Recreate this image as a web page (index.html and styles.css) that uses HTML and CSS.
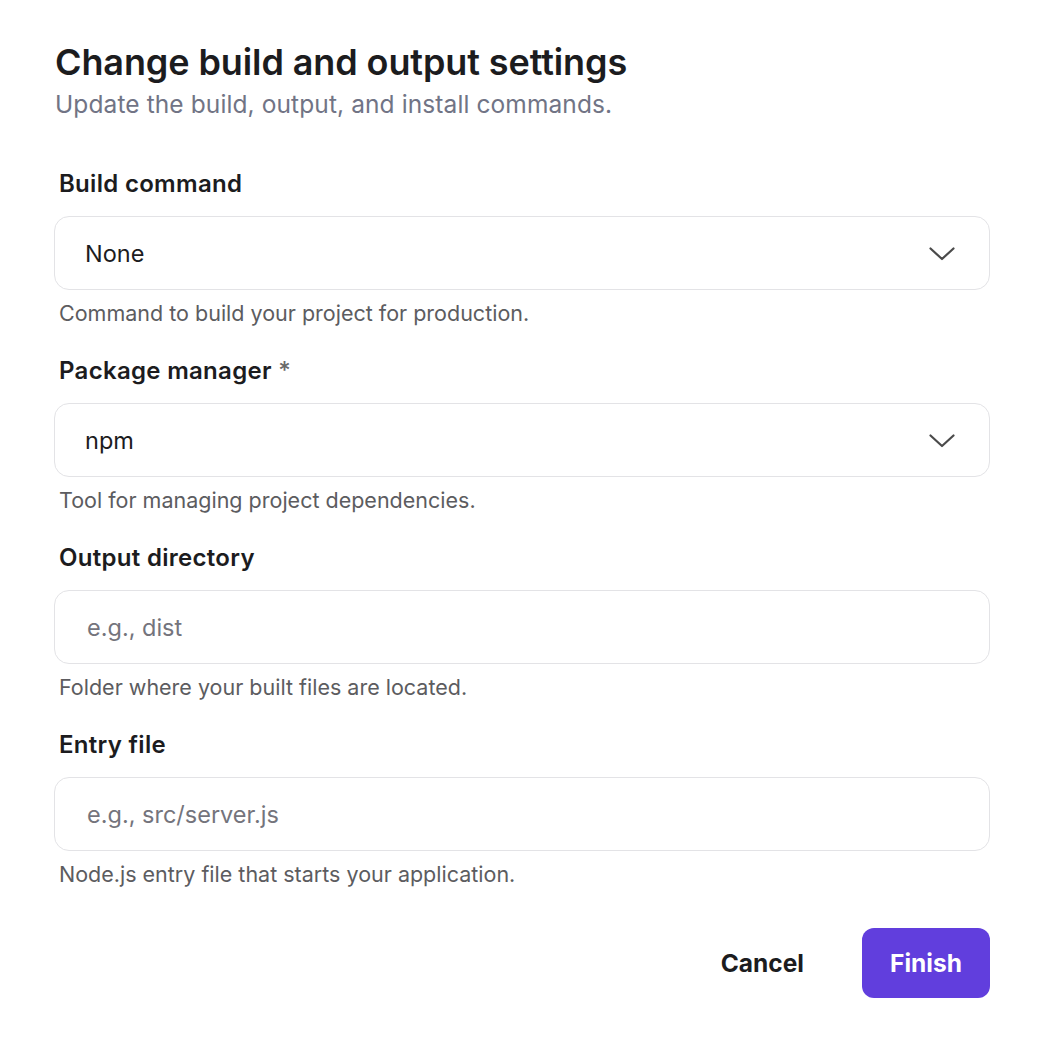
FILE: index.html
```html
<html lang="en">
<head>
    <meta charset="UTF-8">
    <meta name="viewport" content="width=device-width, initial-scale=1.0">
    <title>Build settings</title>
<link rel="stylesheet" href="styles.css">
</head>
<body>
    <div class="dialog">
        <div class="head">
            <h1>Change build and output settings</h1>
            <p class="sub">Update the build, output, and install commands.</p>
        </div>

        <div class="field">
            <label>Build command</label>
            <div class="box select">
                <span>None</span>
                <svg class="chev" width="26" height="14" viewBox="0 0 26 14"><path d="M1.5 1.5 L13 12 L24.5 1.5" fill="none" stroke="#4a4a4a" stroke-width="2.2" stroke-linecap="round" stroke-linejoin="round"/></svg>
            </div>
            <p class="help">Command to build your project for production.</p>
        </div>

        <div class="field">
            <label>Package manager <span class="req">*</span></label>
            <div class="box select">
                <span>npm</span>
                <svg class="chev" width="26" height="14" viewBox="0 0 26 14"><path d="M1.5 1.5 L13 12 L24.5 1.5" fill="none" stroke="#4a4a4a" stroke-width="2.2" stroke-linecap="round" stroke-linejoin="round"/></svg>
            </div>
            <p class="help">Tool for managing project dependencies.</p>
        </div>

        <div class="field">
            <label>Output directory</label>
            <div class="box"><span class="ph">e.g., dist</span></div>
            <p class="help">Folder where your built files are located.</p>
        </div>

        <div class="field">
            <label>Entry file</label>
            <div class="box"><span class="ph">e.g., src/server.js</span></div>
            <p class="help">Node.js entry file that starts your application.</p>
        </div>

        <div class="actions">
            <button class="cancel">Cancel</button>
            <button class="finish">Finish</button>
        </div>
    </div>
</body>
</html>
```

FILE: styles.css
```css
*{
    margin: 0;
    padding: 0;
    box-sizing: border-box;
}

body{
    background: #fff;
    font-family: Inter, "Noto Sans", sans-serif;
    color: #1c1c1e;
}

.dialog{
    width: 1048px;
    padding: 40px 58px 0 54px;
}

.head{
    padding-left: 1px;
    margin-bottom: 49px;
}
h1{
    font-size: 36px;
    font-weight: 600;
    line-height: 44px;
    letter-spacing: -0.1px;
}
.sub{
    font-size: 24.5px;
    line-height: 30px;
    color: #717485;
    margin-top: 5px;
    letter-spacing: 0.1px;
}

.field{
    margin-bottom: 28px;
}
.field label{
    display: block;
    padding-left: 5px;
    font-size: 24px;
    font-weight: 600;
    line-height: 32px;
    margin-bottom: 16px;
    letter-spacing: 0.3px;
}
.req{
    color: #6a6a6a;
    font-weight: 500;
}

.box{
    height: 74px;
    border: 1.5px solid #e3e3e6;
    border-radius: 15px;
    display: flex;
    align-items: center;
    justify-content: space-between;
    padding: 0 34px 0 30px;
    font-size: 23.5px;
}
.ph{
    color: #74747c;
    padding-left: 2px;
}
.chev{
    margin-top: 2px;
}

.help{
    padding-left: 5px;
    margin-top: 9px;
    font-size: 21.5px;
    line-height: 28px;
    color: #5c5c60;
}

.actions{
    display: flex;
    justify-content: flex-end;
    align-items: center;
    gap: 28px;
    margin-top: 40px;
}
.actions button{
    font-family: inherit;
    font-size: 24.5px;
    font-weight: 700;
    border: none;
    cursor: pointer;
}
.cancel{
    background: none;
    color: #1c1c1e;
    padding: 0 30px;
}
.finish{
    background: #613edd;
    color: #fff;
    width: 128px;
    height: 70px;
    border-radius: 12px;
}
```
